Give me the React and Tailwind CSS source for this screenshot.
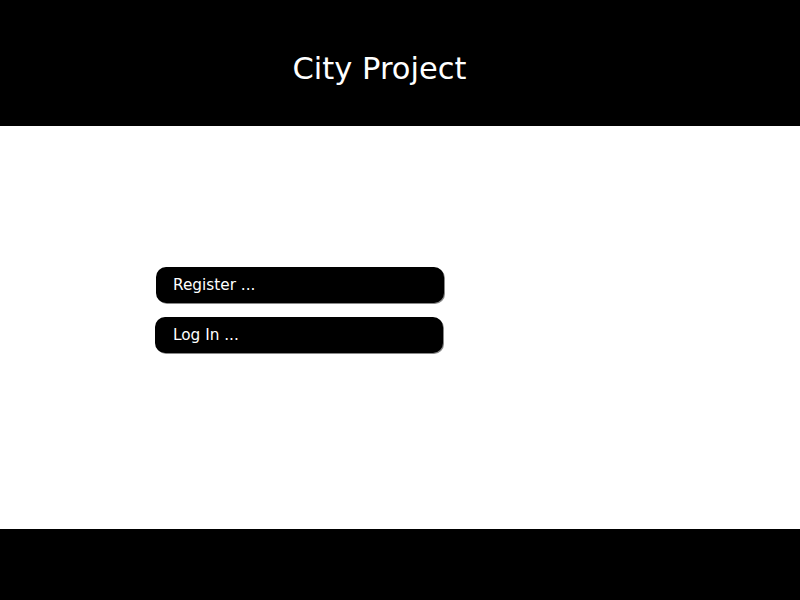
export default function App() {
    return (
        <div className="flex flex-col h-[600px] w-[800px] bg-white font-['DejaVu_Sans',sans-serif]">
            {/* Header */}
            <header className="h-[126px] bg-black flex items-center justify-center pr-[41px]">
                <h1 className="text-white text-[30.5px] leading-none pt-[12px]">City Project</h1>
            </header>

            {/* Main */}
            <main className="flex-1 pt-[141px] pl-[155px] flex flex-col gap-[14px]">
                <button className="ml-px w-[288px] h-[36px] bg-black text-white text-[15.3px] text-left pl-[17px] pt-px rounded-[10px] shadow-[1px_1px_0_#888]">
                    Register ...
                </button>
                <button className="w-[288px] h-[36px] bg-black text-white text-[15.3px] text-left pl-[18px] rounded-[10px] shadow-[1px_1px_0_#888]">
                    Log In ...
                </button>
            </main>

            {/* Footer */}
            <footer className="h-[71px] bg-black"></footer>
        </div>
    );
}
